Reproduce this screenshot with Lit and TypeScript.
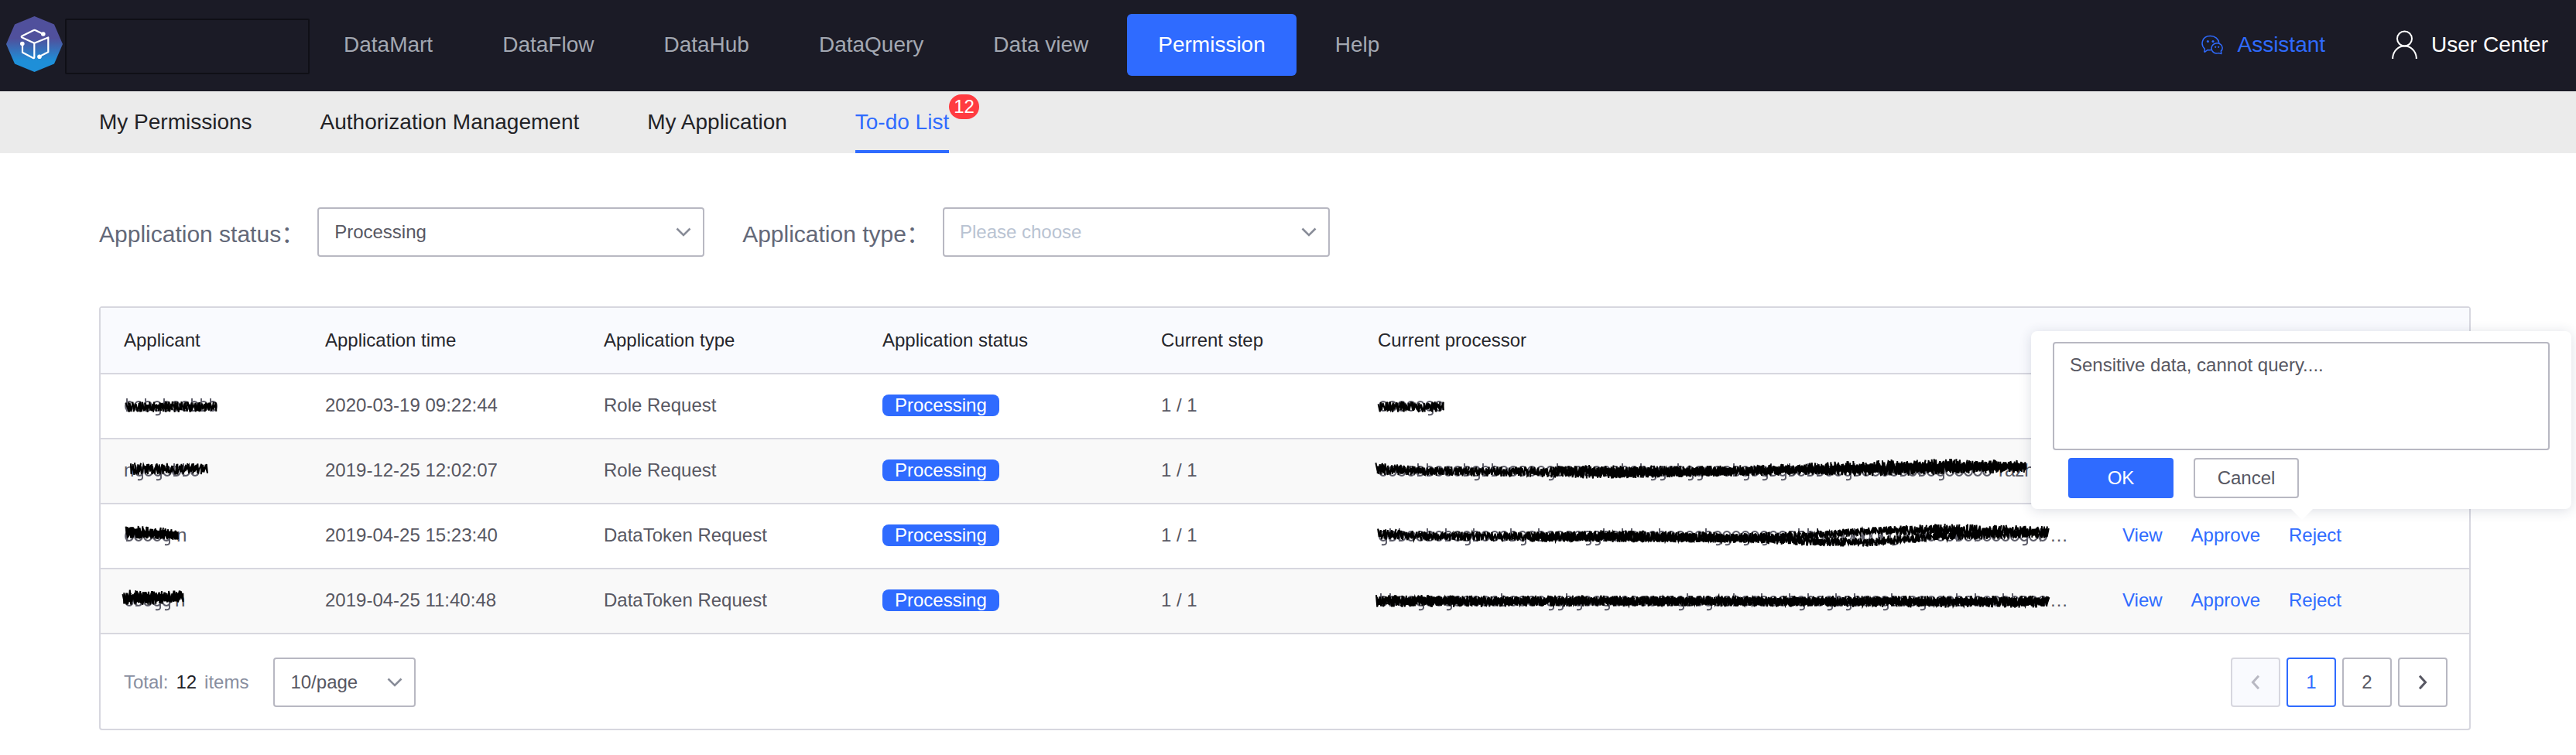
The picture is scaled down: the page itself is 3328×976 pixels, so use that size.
import { LitElement, html, css, svg, nothing } from "lit";
import { customElement, property, state } from "lit/decorators.js";
import { classMap } from "lit/directives/class-map.js";

/** One point of a marker stroke: x, vertical centre, half thickness. */
type Point = [number, number, number];

interface Masked {
  seed: number;
  width: number;
  strokes: Point[][];
  before?: string;
  after?: string;
}

interface Row {
  time: string;
  type: string;
  step: string;
  applicant: Masked;
  processor: Masked;
}

function random(seed: number): () => number {
  let s = seed * 7919 + 17;
  return () => {
    s = (s * 1103515245 + 12345) % 2147483648;
    return s / 2147483648;
  };
}

function scribble(points: Point[], seed: number): string {
  const rnd = random(seed);
  let d = "";
  let up = true;
  for (let i = 0; i < points.length - 1; i++) {
    const [x0, y0, h0] = points[i];
    const [x1, y1, h1] = points[i + 1];
    for (let x = x0; x < x1; x += 0.9) {
      const t = (x - x0) / (x1 - x0);
      const y = y0 + (y1 - y0) * t;
      const h = (h0 + (h1 - h0) * t) * (0.4 + rnd() * 0.6);
      const px = (x + rnd() * 4 - 2).toFixed(1);
      d += `${d ? "L" : "M"}${px} ${(y + (up ? -h : h)).toFixed(1)}`;
      up = !up;
    }
  }
  return d;
}

function shadowMarks(width: number, seed: number): string {
  const rnd = random(seed + 50);
  let d = "";
  for (let x = 2; x < width - 9; x += 12) {
    const r = rnd();
    if (r < 0.25) d += `M${x + 2} -9V8`;
    else if (r < 0.45) d += `M${x + 9} -3V10Q${x + 8} 13 ${x + 3} 12`;
    d += `M${x} 1a5 6 0 1 1 10 0a5 6 0 1 1 -10 0`;
  }
  return d;
}

/** A name hidden behind marker strokes. */
@customElement("masked-name")
export class MaskedName extends LitElement {
  @property({ attribute: false }) mask!: Masked;

  static styles = css`
    :host {
      display: flex;
      align-items: center;
      height: 40px;
      overflow: visible;
    }
    .ink {
      position: relative;
      flex: none;
      height: 40px;
      overflow: visible;
    }
  `;

  render() {
    const m = this.mask;
    return html`${m.before ? html`<span>${m.before}</span>` : nothing}<svg
        class="ink"
        width=${m.width}
        viewBox="0 -20 ${m.width} 40"
        role="img"
        aria-label="Hidden name"
      >
        <path d=${shadowMarks(m.width, m.seed)} fill="none" stroke="#5f5f6b" stroke-width="2" />
        ${m.strokes.map(
          (s, i) => svg`<path d=${scribble(s, m.seed + i)} fill="none" stroke="#000" stroke-width="2" />`
        )}
      </svg>${m.after ? html`<span>${m.after}</span>` : nothing}`;
  }
}

const rows: Row[] = [
  {
    time: "2020-03-19 09:22:44",
    type: "Role Request",
    step: "1 / 1",
    applicant: { seed: 3, width: 121, strokes: [[[4, 2, 7], [120, 2, 7]]] },
    processor: { seed: 5, width: 88, strokes: [[[2, 2, 7], [86, 2, 7]]] },
  },
  {
    time: "2019-12-25 12:02:07",
    type: "Role Request",
    step: "1 / 1",
    applicant: { seed: 7, width: 94, before: "n", strokes: [[[-3, -2, 8], [95, -2, 7]]] },
    processor: {
      seed: 11,
      width: 802,
      after: "razh",
      strokes: [
        [[-2, -2, 8], [60, 1, 6], [220, 2, 7], [270, 2, 9], [450, 1, 7], [560, -2, 8], [664, -3, 11], [740, -5, 10], [838, -5, 8]],
        [[230, 0, 6], [330, 3, 7], [560, 0, 5], [700, -3, 9], [838, -5, 6]],
      ],
    },
  },
  {
    time: "2019-04-25 15:23:40",
    type: "DataToken Request",
    step: "1 / 1",
    applicant: {
      seed: 13,
      width: 68,
      after: "n",
      strokes: [[[3, -5, 9], [70, -1, 7]], [[3, -3, 7], [70, 0, 6]]],
    },
    processor: {
      seed: 17,
      width: 868,
      after: "…",
      strokes: [
        [[0, -2, 8], [60, 1, 6], [220, 2, 7], [300, 1, 8], [480, 3, 7], [560, 0, 6], [640, -6, 5], [730, -7, 8], [866, -4, 8]],
        [[200, 2, 6], [480, 4, 6], [560, 8, 6], [640, 9, 6], [720, 1, 6], [866, -3, 6]],
      ],
    },
  },
  {
    time: "2019-04-25 11:40:48",
    type: "DataToken Request",
    step: "1 / 1",
    applicant: {
      seed: 19,
      width: 66,
      after: "n",
      strokes: [[[0, -4, 10], [40, -3, 9], [76, -6, 7]], [[0, -2, 8], [76, -4, 7]]],
    },
    processor: {
      seed: 23,
      width: 868,
      after: "…",
      strokes: [[[-2, 1, 8], [400, 1, 7], [866, 2, 8]], [[0, 1, 6], [866, 2, 6]]],
    },
  },
];

/** Row whose rejection is being confirmed; the popover covers the rows above it. */
const rejecting = 2;

const menu = ["DataMart", "DataFlow", "DataHub", "DataQuery", "Data view", "Permission", "Help"];
const tabs = ["My Permissions", "Authorization Management", "My Application", "To-do List"];

const chevron = html`<svg class="chevron" width="20" height="12" viewBox="0 0 20 12" aria-hidden="true">
  <path d="M1.5 1.5L10 10l8.500-8.500" fill="none" stroke="#888c98" stroke-width="2.600" />
</svg>`;

@customElement("app-root")
export class AppRoot extends LitElement {
  @state() private page = 1;

  static styles = css`
    :host {
      display: block;
      background: #fff;
      color: #575762;
      font-family: "Liberation Sans", Arial, sans-serif;
      font-size: 24px;
      line-height: 28px;
    }
    * {
      box-sizing: border-box;
    }
    a {
      color: inherit;
      text-decoration: none;
    }
    button,
    select,
    textarea {
      margin: 0;
      font: inherit;
      color: inherit;
      background: #fff;
      border: 2px solid #b8b8c2;
      border-radius: 4px;
    }
    .header {
      display: flex;
      align-items: center;
      height: 118px;
      padding: 0 36px 2px 8px;
      background: #1b1b26;
      color: #a3a8b2;
      font-size: 28px;
      line-height: 32px;
    }
    .brand {
      display: flex;
      gap: 3px;
      margin-right: 4px;
    }
    .brand-name {
      width: 316px;
      height: 72px;
      margin-top: 3px;
      border: 2px solid #0f0f16;
      border-radius: 2px;
    }
    .menu {
      display: flex;
      gap: 10px;
      flex: 1;
    }
    .menu-item {
      height: 80px;
      padding: 24px 40px;
      border-radius: 6px;
      white-space: nowrap;
    }
    .menu-item.active {
      background: #2f6bff;
      color: #fff;
    }
    .tools {
      display: flex;
      gap: 86px;
    }
    .tool {
      display: flex;
      align-items: center;
      gap: 18px;
      color: #fff;
      white-space: nowrap;
    }
    .tool.assistant {
      color: #2f6bff;
    }
    .tabs {
      display: flex;
      gap: 88px;
      padding: 0 128px;
      background: #ebebeb;
      color: #222226;
      font-size: 28px;
      line-height: 32px;
    }
    .tab {
      position: relative;
      padding: 24px 0;
    }
    .tab.active {
      color: #2f6bff;
      box-shadow: inset 0 -4px #2f6bff;
    }
    .badge {
      position: absolute;
      top: 4px;
      left: 100%;
      padding: 0 6px;
      border-radius: 16px;
      background: #ff3b41;
      color: #fff;
      font-size: 24px;
    }
    .content {
      padding: 70px 136px 32px 128px;
    }
    .filters {
      display: flex;
      gap: 49px;
      margin-bottom: 64px;
    }
    .filter {
      display: flex;
      align-items: center;
      gap: 17px;
    }
    .filter-label {
      padding-top: 6px;
      color: #636878;
      font-family: "Liberation Sans", "Noto Sans CJK SC", sans-serif;
      font-size: 30px;
      line-height: 36px;
    }
    .picker {
      position: relative;
      width: 500px;
    }
    .picker.small {
      width: 184px;
    }
    .select {
      display: block;
      width: 100%;
      height: 64px;
      padding: 0 20px;
      appearance: none;
    }
    .select.empty {
      color: #b9c3d2;
    }
    .chevron {
      position: absolute;
      top: 26px;
      right: 17px;
      pointer-events: none;
    }
    .card {
      border: 2px solid #d7d7df;
      border-radius: 4px;
    }
    .grid {
      width: 100%;
      border-collapse: separate;
      border-spacing: 0;
      table-layout: fixed;
    }
    .applicant {
      width: 260px;
    }
    .wide {
      width: 360px;
    }
    .step {
      width: 280px;
    }
    .actions {
      width: 478px;
    }
    th,
    td {
      height: 84px;
      padding: 0 30px 2px;
      border-bottom: 2px solid #d7d7df;
      font-weight: 400;
      text-align: left;
      white-space: nowrap;
    }
    th {
      height: 86px;
      padding-bottom: 0;
      background: #f9fafe;
      color: #26262c;
    }
    tbody tr:nth-child(even) {
      background: #f9f9f9;
    }
    .status {
      display: inline-block;
      padding: 0 16px;
      border-radius: 8px;
      background: #2f6bff;
      color: #fff;
    }
    .links {
      display: flex;
      gap: 37px;
    }
    .links.covered {
      visibility: hidden;
    }
    .link {
      padding: 0;
      border: 0;
      background: none;
      color: #2f6bff;
    }
    .anchor {
      position: relative;
      display: flex;
    }
    .popover {
      position: absolute;
      z-index: 2;
      right: -297px;
      bottom: calc(100% + 20px);
      width: 698px;
      padding: 14px 28px;
      border-radius: 8px;
      background: #fff;
      box-shadow: 0 2px 16px rgba(40, 50, 90, 0.16);
    }
    .popover::after {
      content: "";
      position: absolute;
      top: 100%;
      left: 336px;
      border: 14px solid transparent;
      border-top: 14px solid #fff;
      border-bottom: 0;
    }
    .reason {
      display: block;
      width: 100%;
      height: 140px;
      padding: 14px 20px;
      resize: none;
      outline: none;
    }
    .confirm {
      display: flex;
      gap: 26px;
      padding: 10px 20px 0;
    }
    .button {
      width: 136px;
      height: 52px;
      padding: 0;
    }
    .button.primary {
      border-color: #2f6bff;
      background: #2f6bff;
      color: #fff;
    }
    .footer {
      display: flex;
      align-items: center;
      justify-content: space-between;
      padding: 30px 28px 28px 30px;
    }
    .summary,
    .total,
    .pages {
      display: flex;
      align-items: center;
      gap: 8px;
    }
    .summary {
      gap: 32px;
    }
    .total {
      gap: 10px;
      color: #888ea0;
    }
    .count {
      color: #222226;
    }
    .page {
      display: grid;
      place-items: center;
      width: 64px;
      height: 64px;
      padding: 0;
    }
    .page.current {
      border-color: #2f6bff;
      color: #2f6bff;
    }
    .page:disabled {
      border-color: #d7d7df;
      background: #f9fafe;
      color: #b8b8c2;
    }
  `;

  private renderHeader() {
    return html`<header class="header">
      <div class="brand">
        <svg width="73" height="72" viewBox="0 0 73 72" role="img" aria-label="Logo">
          <defs>
            <linearGradient id="sky" x1="0" y1="0" x2="0" y2="1">
              <stop offset=".4" stop-color="#50509c" />
              <stop offset=".8" stop-color="#1e8fd8" />
            </linearGradient>
          </defs>
          <path d="M36.500 0L62 10.500 73 36 62 61.500 36.500 72 11 61.500 0 36 11 10.500z" fill="url(#sky)" />
          <g fill="none" stroke="#fff" stroke-width="2.200" stroke-linejoin="round">
            <path d="M47.700 23L38 18.200q-1.400-.7-2.800 0L20.500 25.500q-1.600 1 0 2L36.300 34.700 54.300 27.500V46.300L43 52" />
            <path d="M36.300 34.700V53q0 1.600-1.500 1L21 46.700V36" />
          </g>
          <g fill="#fff">
            <circle cx="47.800" cy="23" r="2.800" />
            <circle cx="43" cy="52.200" r="2.800" />
            <circle cx="20.800" cy="35.500" r="2.800" />
          </g>
        </svg>
        <div class="brand-name"></div>
      </div>
      <nav class="menu" aria-label="Main">
        ${menu.map(
          (m) => html`<a class=${classMap({ "menu-item": true, active: m === "Permission" })} href="#">${m}</a>`
        )}
      </nav>
      <div class="tools">
        <a class="tool assistant" href="#">
          <svg width="28" height="26" viewBox="0 0 28 26" aria-hidden="true">
            <g fill="none" stroke="currentColor" stroke-width="1.500" stroke-linejoin="round">
              <path d="M12.500 19.600Q10 20 8 19.500L4.600 22.200Q3.800 22.400 4 21.500L4.400 18.200C-1.500 13 .5 1.500 11.500 1.500 18 1.500 22.200 5.500 22.800 10.500" />
              <path d="M25.400 20.800L25.800 24.600 22.500 23.600C17 25.200 13 21.500 13 17.300 13 13.400 16.500 10.800 20.300 10.800 24.500 10.800 27.200 14 27.200 17 27.200 18.800 26.500 20 25.400 20.800z" />
            </g>
            <g fill="currentColor">
              <circle cx="8.400" cy="8.500" r="1.500" />
              <circle cx="15" cy="8.500" r="1.500" />
              <circle cx="18.200" cy="15.800" r="1.100" />
              <circle cx="22.200" cy="15.800" r="1.100" />
            </g>
          </svg>
          Assistant
        </a>
        <a class="tool" href="#">
          <svg width="33" height="38" viewBox="0 0 33 38" aria-hidden="true">
            <g fill="none" stroke="currentColor" stroke-width="2">
              <circle cx="16.500" cy="11" r="9.500" />
              <path d="M1.200 37V35.500C2 26.500 8.500 20.600 16.500 20.600S31 26.500 31.800 35.500V37" />
            </g>
          </svg>
          User Center
        </a>
      </div>
    </header>`;
  }

  private renderPopover() {
    return html`<div class="popover" role="dialog" aria-label="Reject">
      <textarea class="reason" aria-label="Reason" .value=${"Sensitive data, cannot query...."}></textarea>
      <div class="confirm">
        <button class="button primary" type="button">OK</button>
        <button class="button" type="button">Cancel</button>
      </div>
    </div>`;
  }

  private renderRow(row: Row, index: number) {
    return html`<tr>
      <td><masked-name .mask=${row.applicant}></masked-name></td>
      <td>${row.time}</td>
      <td>${row.type}</td>
      <td><span class="status">Processing</span></td>
      <td>${row.step}</td>
      <td><masked-name .mask=${row.processor}></masked-name></td>
      <td>
        <div class=${classMap({ links: true, covered: index < rejecting })}>
          <button class="link" type="button">View</button>
          <button class="link" type="button">Approve</button>
          <div class="anchor">
            <button class="link" type="button">Reject</button>
            ${index === rejecting ? this.renderPopover() : nothing}
          </div>
        </div>
      </td>
    </tr>`;
  }

  private renderPages() {
    return html`<nav class="pages" aria-label="Pages">
      <button class="page" type="button" aria-label="Previous" ?disabled=${this.page === 1} @click=${() => (this.page = 1)}>
        <svg width="12" height="20" viewBox="0 0 12 20" aria-hidden="true">
          <path d="M10 1.800L2.500 10l7.500 8.200" fill="none" stroke="currentColor" stroke-width="3" />
        </svg>
      </button>
      ${[1, 2].map(
        (n) => html`<button
          class=${classMap({ page: true, current: n === this.page })}
          type="button"
          @click=${() => (this.page = n)}
        >${n}</button>`
      )}
      <button class="page" type="button" aria-label="Next" @click=${() => (this.page = 2)}>
        <svg width="12" height="20" viewBox="0 0 12 20" aria-hidden="true">
          <path d="M2 1.800L9.500 10 2 18.200" fill="none" stroke="currentColor" stroke-width="3" />
        </svg>
      </button>
    </nav>`;
  }

  render() {
    return html`
      ${this.renderHeader()}
      <nav class="tabs" aria-label="Permission">
        ${tabs.map((t) => {
          const active = t === "To-do List";
          return html`<a class=${classMap({ tab: true, active })} href="#"
            >${t}${active ? html`<span class="badge">12</span>` : nothing}</a
          >`;
        })}
      </nav>
      <main class="content">
        <form class="filters">
          <div class="filter">
            <label class="filter-label" for="status">Application status：</label>
            <div class="picker">
              <select class="select" id="status"><option>Processing</option></select>
              ${chevron}
            </div>
          </div>
          <div class="filter">
            <label class="filter-label" for="type">Application type：</label>
            <div class="picker">
              <select class="select empty" id="type"><option value="">Please choose</option></select>
              ${chevron}
            </div>
          </div>
        </form>
        <section class="card">
          <table class="grid">
            <thead>
              <tr>
                <th class="applicant">Applicant</th>
                <th class="wide">Application time</th>
                <th class="wide">Application type</th>
                <th class="wide">Application status</th>
                <th class="step">Current step</th>
                <th>Current processor</th>
                <th class="actions" aria-label="Actions"></th>
              </tr>
            </thead>
            <tbody>
              ${rows.map((r, i) => this.renderRow(r, i))}
            </tbody>
          </table>
          <div class="footer">
            <div class="summary">
              <div class="total"><span>Total:</span><span class="count">12</span><span>items</span></div>
              <div class="picker small">
                <select class="select" aria-label="Items per page"><option>10/page</option></select>
                ${chevron}
              </div>
            </div>
            ${this.renderPages()}
          </div>
        </section>
      </main>
    `;
  }
}
